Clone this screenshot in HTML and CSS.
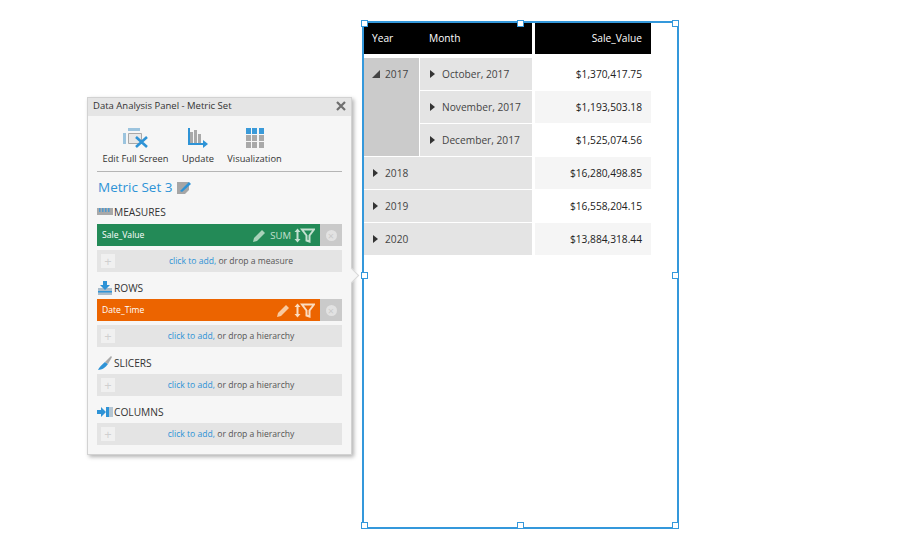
FILE: index.html
```html
<!DOCTYPE html>
<html lang="en">
<head>
  <meta charset="UTF-8" />
  <title>Metric Set</title>
  <link rel="stylesheet" href="styles.css">
</head>
<body>
  <div class="panel">
    <div class="panel-title">
      <span>Data Analysis Panel - Metric Set</span>
      <svg class="close" width="10" height="10" viewBox="0 0 10 10"><path d="M1 1l8 8M9 1l-8 8" stroke="#6e6e6e" stroke-width="2.2"/></svg>
    </div>
    <div class="panel-body">
      <div class="toolbar">
        <div class="tool tool-edit">
          <svg width="26" height="20" viewBox="0 0 26 20">
            <path d="M5 0h12v3H5z" fill="#9cc4de"/>
            <path d="M0 5h3v11H0z" fill="#9cc4de"/>
            <path d="M5.500 5.500h13v10h-13z" fill="#e8e8e8" stroke="#a8a8a8"/>
            <path d="M13 9l11 10M24 9L13 19" stroke="#2e93d6" stroke-width="2.600"/>
          </svg>
          <span>Edit Full Screen</span>
        </div>
        <div class="tool tool-update">
          <svg width="22" height="20" viewBox="0 0 22 20">
            <path d="M3 4h3v12H3zM7 2h3v14H7zM11 6h3v10h-3z" fill="#a9a9a9"/>
            <path d="M2 0v16h15" fill="none" stroke="#2e93d6" stroke-width="2"/>
            <path d="M16 12l5 4-5 4z" fill="#2e93d6"/>
          </svg>
          <span>Update</span>
        </div>
        <div class="tool tool-vis">
          <div class="vis-grid">
            <i class="on"></i><i class="on"></i><i class="on"></i>
            <i></i><i></i><i></i>
            <i></i><i></i><i></i>
          </div>
          <span>Visualization</span>
        </div>
      </div>

      <div class="metric-name">
        <span>Metric Set 3</span>
        <svg width="15" height="15" viewBox="0 0 15 15">
          <path d="M0 2h12v8l-4 4H0z" fill="#a6a6a6"/>
          <path d="M3 11l9-9 2 2-9 8z" fill="#2e93d6"/>
        </svg>
      </div>

      <div class="section-head head-first">
        <svg width="16" height="12" viewBox="0 0 16 12">
          <path d="M0 2h16v7H0z" fill="#a9a9a9"/>
          <path d="M2 2h1.500v4H2zM5 2h1.500v4H5zM8 2h1.500v4H8zM11 2h1.500v4H11z" fill="#4f9ad0"/>
        </svg>
        <span>MEASURES</span>
      </div>
      <div class="field">
        <div class="field-bar green">
          <span class="field-name">Sale_Value</span>
          <svg width="15" height="15" viewBox="0 0 15 15"><path d="M1 14l1-4 8-8 3 3-8 8z" fill="#a9d2ba"/></svg>
          <span class="sum">SUM</span>
          <svg width="21" height="15" viewBox="0 0 21 15"><path d="M3.500 2v11" stroke="#c4e0cf" stroke-width="2"/><path d="M0.500 4l3-3.500 3 3.500zM0.500 11l3 3.500 3-3.500z" fill="#c4e0cf"/><path d="M8 1.500h12l-4.500 6v6l-3-1v-5z" fill="none" stroke="#c4e0cf" stroke-width="2"/></svg>
        </div>
        <div class="field-remove"><span>×</span></div>
      </div>
      <div class="add-row">
        <span class="plus">+</span>
        <span class="add-text"><a>click to add,</a> or drop a measure</span>
      </div>

      <div class="section-head">
        <svg width="16" height="14" viewBox="0 0 16 14">
          <path d="M1 7h14v7H1z" fill="#a9bccb"/>
          <path d="M6 0h4v4h3l-5 5-5-5h3z" fill="#2e93d6"/>
          <path d="M1 10h14v1.500H1z" fill="#2e93d6"/>
        </svg>
        <span>ROWS</span>
      </div>
      <div class="field">
        <div class="field-bar orange">
          <span class="field-name">Date_Time</span>
          <svg width="15" height="15" viewBox="0 0 15 15"><path d="M1 14l1-4 8-8 3 3-8 8z" fill="#f8c9a0"/></svg>
          <svg width="21" height="15" viewBox="0 0 21 15"><path d="M3.500 2v11" stroke="#fbdcc0" stroke-width="2"/><path d="M0.500 4l3-3.500 3 3.500zM0.500 11l3 3.500 3-3.500z" fill="#fbdcc0"/><path d="M8 1.500h12l-4.500 6v6l-3-1v-5z" fill="none" stroke="#fbdcc0" stroke-width="2"/></svg>
        </div>
        <div class="field-remove"><span>×</span></div>
      </div>
      <div class="add-row">
        <span class="plus">+</span>
        <span class="add-text"><a>click to add,</a> or drop a hierarchy</span>
      </div>

      <div class="section-head">
        <svg width="16" height="14" viewBox="0 0 16 14">
          <path d="M1 14c1-3 4-5 7-8l3 2c-2 3-6 6-10 6z" fill="#2e93d6"/>
          <path d="M8 6l6-6 1 1-4 7z" fill="#a9a9a9"/>
        </svg>
        <span>SLICERS</span>
      </div>
      <div class="add-row">
        <span class="plus">+</span>
        <span class="add-text"><a>click to add,</a> or drop a hierarchy</span>
      </div>

      <div class="section-head">
        <svg width="16" height="12" viewBox="0 0 16 12">
          <path d="M11 1h5v10h-5z" fill="#b5c6d3"/>
          <path d="M9 1h3v10H9z" fill="#2e93d6"/>
          <path d="M0 4h4V1l5 5-5 5V8H0z" fill="#2e93d6"/>
        </svg>
        <span>COLUMNS</span>
      </div>
      <div class="add-row">
        <span class="plus">+</span>
        <span class="add-text"><a>click to add,</a> or drop a hierarchy</span>
      </div>
    </div>
    <div class="panel-notch"></div>
  </div>

  <div class="widget">
    <i class="handle h-tl"></i><i class="handle h-tc"></i><i class="handle h-tr"></i>
    <i class="handle h-ml"></i><i class="handle h-mr"></i>
    <i class="handle h-bl"></i><i class="handle h-bc"></i><i class="handle h-br"></i>

    <div class="pivot">
      <div class="cell head head-labels"><span class="head-year">Year</span><span>Month</span></div>
      <div class="cell head value">Sale_Value</div>

      <div class="cell year-open"><span class="arrow-open"></span>2017</div>
      <div class="cell month"><span class="arrow"></span>October, 2017</div>
      <div class="cell value">$1,370,417.75</div>
      <div class="cell month"><span class="arrow"></span>November, 2017</div>
      <div class="cell value alt">$1,193,503.18</div>
      <div class="cell month"><span class="arrow"></span>December, 2017</div>
      <div class="cell value">$1,525,074.56</div>

      <div class="cell year"><span class="arrow"></span>2018</div>
      <div class="cell value alt">$16,280,498.85</div>
      <div class="cell year"><span class="arrow"></span>2019</div>
      <div class="cell value">$16,558,204.15</div>
      <div class="cell year"><span class="arrow"></span>2020</div>
      <div class="cell value alt">$13,884,318.44</div>
    </div>
  </div>
</body>
</html>
```

FILE: styles.css
```css
body {
  margin: 0;
  height: 553px;
  background: #fff;
  font-family: "Open Sans", "Noto Sans", sans-serif;
  font-size: 10px;
  color: #333;
  overflow: hidden;
}

/* floating panel */
.panel {
  position: absolute;
  left: 87px;
  top: 97px;
  width: 265px;
  height: 358px;
  box-sizing: border-box;
  background: #f6f6f6;
  border: 1px solid #d2d2d2;
  box-shadow: 2px 2px 4px rgba(0, 0, 0, 0.3);
}
.panel-title {
  display: flex;
  justify-content: space-between;
  align-items: center;
  box-sizing: border-box;
  height: 18px;
  padding: 0 5px 3px;
  background: #e5e5e5;
  font-size: 9.5px;
}
.panel-body {
  padding: 0 9px;
}
.panel-notch {
  position: absolute;
  right: -6px;
  top: 172px;
  width: 10px;
  height: 10px;
  background: #f6f6f6;
  border-top: 1px solid #d8d8d8;
  border-right: 1px solid #d8d8d8;
  transform: rotate(45deg);
}

.toolbar {
  display: flex;
  height: 55px;
  padding-left: 5px;
  border-bottom: 1px solid #b5b5b5;
}
.tool {
  display: flex;
  flex-direction: column;
  align-items: center;
  padding-top: 12px;
  font-size: 9.3px;
  white-space: nowrap;
}
.tool svg, .vis-grid {
  flex: none;
  height: 20px;
  margin-bottom: 4px;
}
.tool-edit { width: 67px; }
.tool-update { width: 30px; margin-left: 14px; }
.tool-vis { width: 55px; margin-left: 14px; }
.vis-grid {
  display: grid;
  grid-template-columns: repeat(3, 5px);
  grid-template-rows: repeat(3, 5.5px);
  gap: 1.500px;
}
.vis-grid i { background: #a9a9a9; }
.vis-grid i.on { background: #3a9ad9; }

.metric-name {
  display: flex;
  align-items: center;
  gap: 5px;
  box-sizing: border-box;
  height: 32px;
  padding: 0 0 2px 1px;
  font-size: 13.5px;
  color: #2e93d6;
}

.section-head {
  display: flex;
  align-items: center;
  gap: 1px;
  height: 16px;
  margin-bottom: 3px;
  font-size: 10.2px;
  color: #333;
}
.head-first { margin-bottom: 4px; }

.field {
  display: flex;
  height: 22px;
  margin-bottom: 4px;
}
.field-bar {
  flex: 1;
  display: flex;
  align-items: center;
  gap: 3px;
  padding: 0 5px;
  color: #fff;
  font-size: 8.6px;
}
.field-name { flex: 1; }
.green { background: #238a57; }
.orange { background: #ec6400; }
.sum {
  font-size: 9.5px;
  color: #c4e0cf;
}
.field-remove {
  display: flex;
  align-items: center;
  justify-content: center;
  width: 22px;
  background: #cacaca;
}
.field-remove span {
  width: 11px;
  height: 11px;
  border-radius: 50%;
  background: #e2e2e2;
  color: #cacaca;
  font-size: 11px;
  line-height: 11px;
  text-align: center;
}

.add-row {
  display: flex;
  align-items: center;
  height: 22px;
  padding-left: 4px;
  margin-bottom: 8px;
  background: #e4e4e4;
  color: #555;
  font-size: 8.6px;
}
.plus {
  width: 14px;
  height: 14px;
  background: #f0f0f0;
  color: #d0d0d0;
  font-size: 13px;
  line-height: 14px;
  text-align: center;
}
.add-text {
  flex: 1;
  padding-left: 5px;
  text-align: center;
}
.add-text a { color: #2e93d6; }

/* selected widget */
.widget {
  position: absolute;
  left: 362px;
  top: 21px;
  width: 317px;
  height: 508px;
  box-sizing: border-box;
  border: 2px solid #3498db;
}
.handle {
  position: absolute;
  width: 5px;
  height: 5px;
  background: #fff;
  border: 1px solid #3498db;
}
.h-tl { left: -3px; top: -3px; }
.h-tc { left: 153px; top: -3px; }
.h-tr { right: -2px; top: -3px; }
.h-ml { left: -3px; top: 249px; }
.h-mr { right: -2px; top: 249px; }
.h-bl { left: -3px; bottom: -2px; }
.h-bc { left: 153px; bottom: -2px; }
.h-br { right: -2px; bottom: -2px; }

.pivot {
  display: grid;
  grid-template-columns: 55px 1px 112px 3px 116px;
  grid-template-rows: 34px repeat(6, 32px);
  row-gap: 1px;
  font-size: 10.2px;
}
.cell {
  display: flex;
  align-items: center;
  color: #444;
}
.value {
  grid-column: 5;
  justify-content: flex-end;
  padding-right: 9px;
  color: #222;
}
.head {
  margin-bottom: 3px;
  padding-bottom: 1px;
  background: #000;
  color: #fff;
}
.head-labels {
  grid-column: 1 / 4;
  padding-left: 8px;
}
.head-year { width: 57px; }
.alt { background: #f5f5f5; }
.year-open {
  grid-column: 1;
  grid-row: 2 / 5;
  align-items: flex-start;
  padding-top: 9px;
  padding-left: 8px;
  background: #cbcbcb;
}
.month {
  grid-column: 3;
  padding-left: 10px;
  background: #e4e4e4;
}
.year {
  grid-column: 1 / 4;
  padding-left: 9px;
  background: #e4e4e4;
}
.arrow {
  width: 0;
  height: 0;
  margin-right: 7px;
  border-left: 5px solid #333;
  border-top: 4.500px solid transparent;
  border-bottom: 4.500px solid transparent;
}
.arrow-open {
  width: 0;
  height: 0;
  margin: 3px 5px 0 0;
  border-right: 8px solid #444;
  border-top: 8px solid transparent;
}
```
